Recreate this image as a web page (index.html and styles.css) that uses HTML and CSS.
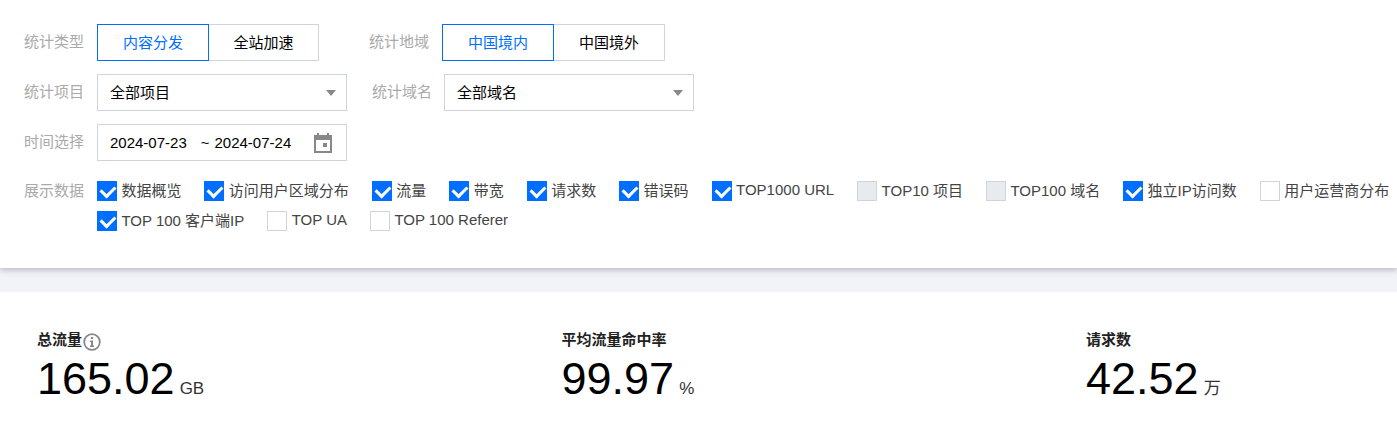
FILE: index.html
```html
<!DOCTYPE html>
<html lang="en">
<head>
  <meta charset="UTF-8" />
  <title>统计数据</title>
  <link rel="stylesheet" href="styles.css">
</head>
<body>

<div class="filter-panel">
  <!-- 统计类型 / 统计地域 -->
  <div class="filter-row">
    <span class="filter-label">统计类型</span>
    <div class="tabs">
      <button class="tab tab-first active">内容分发</button>
      <button class="tab tab-second">全站加速</button>
    </div>
    <span class="filter-label label-region">统计地域</span>
    <div class="tabs">
      <button class="tab tab-region active">中国境内</button>
      <button class="tab tab-region-second">中国境外</button>
    </div>
  </div>

  <!-- 统计项目 / 统计域名 -->
  <div class="filter-row">
    <span class="filter-label">统计项目</span>
    <div class="select"><span class="select-text">全部项目</span><i class="caret"></i></div>
    <span class="filter-label label-domain">统计域名</span>
    <div class="select"><span class="select-text">全部域名</span><i class="caret"></i></div>
  </div>

  <!-- 时间选择 -->
  <div class="filter-row">
    <span class="filter-label">时间选择</span>
    <div class="select date-picker">
      <span class="date-text">2024-07-23</span>
      <span class="date-sep">~</span>
      <span class="date-text">2024-07-24</span>
      <svg class="date-icon" width="18" height="20" viewBox="0 0 18 20">
        <path fill="#888" fill-rule="evenodd" d="M3 0h2v2h8V0h2v2h3v18H0V2h3zM2 7v11h14V7z"/>
        <rect x="9" y="10" width="4" height="4" fill="#888"/>
      </svg>
    </div>
  </div>

  <!-- 展示数据 -->
  <div class="filter-row check-row">
    <span class="filter-label">展示数据</span>
    <div class="check-list">
      <label class="check-item"><i class="box checked"></i><span class="check-text">数据概览</span></label>
      <label class="check-item"><i class="box checked"></i><span class="check-text">访问用户区域分布</span></label>
      <label class="check-item"><i class="box checked"></i><span class="check-text">流量</span></label>
      <label class="check-item"><i class="box checked"></i><span class="check-text">带宽</span></label>
      <label class="check-item"><i class="box checked"></i><span class="check-text">请求数</span></label>
      <label class="check-item"><i class="box checked"></i><span class="check-text">错误码</span></label>
      <label class="check-item"><i class="box checked"></i><span class="check-text">TOP1000 URL</span></label>
      <label class="check-item"><i class="box disabled"></i><span class="check-text">TOP10 项目</span></label>
      <label class="check-item"><i class="box disabled"></i><span class="check-text">TOP100 域名</span></label>
      <label class="check-item"><i class="box checked"></i><span class="check-text">独立IP访问数</span></label>
      <label class="check-item"><i class="box"></i><span class="check-text">用户运营商分布</span></label>
      <label class="check-item"><i class="box checked"></i><span class="check-text">TOP 100 客户端IP</span></label>
      <label class="check-item"><i class="box"></i><span class="check-text">TOP UA</span></label>
      <label class="check-item"><i class="box"></i><span class="check-text">TOP 100 Referer</span></label>
    </div>
  </div>
</div>

<div class="stats">
  <div class="stat">
    <div class="stat-title">总流量
      <svg class="info-icon" width="18" height="18" viewBox="0 0 18 18">
        <circle cx="9" cy="9" r="7.8" fill="none" stroke="#888" stroke-width="1.8"/>
        <rect x="8" y="4" width="2" height="2" fill="#888"/>
        <path fill="#888" d="M7 7.500h3v5h1V14H7v-1.500h1V9H7z"/>
      </svg>
    </div>
    <div class="stat-value">165.02<span class="stat-unit">GB</span></div>
  </div>
  <div class="stat">
    <div class="stat-title">平均流量命中率</div>
    <div class="stat-value">99.97<span class="stat-unit">%</span></div>
  </div>
  <div class="stat">
    <div class="stat-title">请求数</div>
    <div class="stat-value">42.52<span class="stat-unit">万</span></div>
  </div>
</div>

</body>
</html>
```

FILE: styles.css
```css
* {
  box-sizing: border-box;
}

body {
  margin: 0;
  font-family: "Liberation Sans", Arial, "Noto Sans CJK SC", sans-serif;
  font-size: 15px;
  color: #000;
  background-color: #f2f3f8;
  overflow: hidden;
}

.filter-panel {
  height: 268px;
  padding: 24px 0 0 24px;
  background: white;
  box-shadow: 0 2px 6px rgba(54, 58, 80, 0.32);
  position: relative;
}

.filter-row {
  display: flex;
  align-items: center;
  height: 37px;
  margin-bottom: 13px;
}

.filter-label {
  width: 60px;
  margin-right: 13px;
  padding-bottom: 4px;
  color: #aaa;
  white-space: nowrap;
}

.label-region {
  margin-left: 50px;
}

.label-domain {
  margin-left: 25px;
  margin-right: 12px;
}

.tabs {
  display: flex;
}

.tab {
  height: 37px;
  padding: 0 0 2px;
  border: 1px solid #cfd5de;
  background: white;
  color: #000;
  font: inherit;
}

.tab-first {
  width: 112px;
}

.tab-second {
  width: 110px;
  border-left: none;
}

.tab-region {
  width: 112px;
}

.tab-region-second {
  width: 111px;
  border-left: none;
}

.tab.active {
  border-color: #006eff;
  color: #006eff;
}

.select {
  display: flex;
  align-items: center;
  justify-content: space-between;
  width: 250px;
  height: 37px;
  padding: 0 10px 0 12px;
  border: 1px solid #cfd5de;
  background: white;
}

.select-text {
  padding-bottom: 2px;
}

.caret {
  width: 0;
  height: 0;
  border-left: 5px solid transparent;
  border-right: 5px solid transparent;
  border-top: 6px solid #888;
}

.date-picker {
  justify-content: flex-start;
  padding-right: 14px;
}

.date-sep {
  margin: 0 5px 0 14px;
}

.date-icon {
  margin-left: auto;
}

.check-row {
  align-items: flex-start;
  height: auto;
  margin-top: 20px;
}

.check-row .filter-label {
  padding-bottom: 0;
  line-height: 20px;
}

.check-list {
  display: flex;
  flex-wrap: wrap;
  column-gap: 23px;
  row-gap: 10px;
  flex: 1;
}

.check-item {
  display: flex;
  align-items: center;
  height: 20px;
  color: #444;
  white-space: nowrap;
}

.check-text {
  padding-bottom: 3px;
}

.box {
  width: 20px;
  height: 20px;
  margin-right: 4.43px;
  border: 1px solid #cfd5de;
  background: white;
  position: relative;
}

.box.checked {
  border-color: #006eff;
  background: #006eff;
}

.box.checked::after {
  content: "";
  position: absolute;
  left: 5px;
  top: 1px;
  width: 7px;
  height: 11px;
  border-right: 3px solid white;
  border-bottom: 3px solid white;
  transform: rotate(45deg);
}

.box.disabled {
  background: #e7eaef;
}

.stats {
  display: grid;
  grid-template-columns: 524.5px 524.5px 1fr;
  height: 144px;
  margin-top: 24px;
  padding: 36px 0 0 37px;
  background: white;
}

.stat-title {
  display: flex;
  align-items: center;
  height: 20px;
  font-weight: bold;
  color: #222;
}

.info-icon {
  margin: 7px 0 0 1px;
}

.stat-value {
  margin-top: 6px;
  font-size: 45px;
  line-height: 50px;
  color: #000;
}

.stat-unit {
  margin-left: 5px;
  font-size: 17px;
  color: #333;
}
```
